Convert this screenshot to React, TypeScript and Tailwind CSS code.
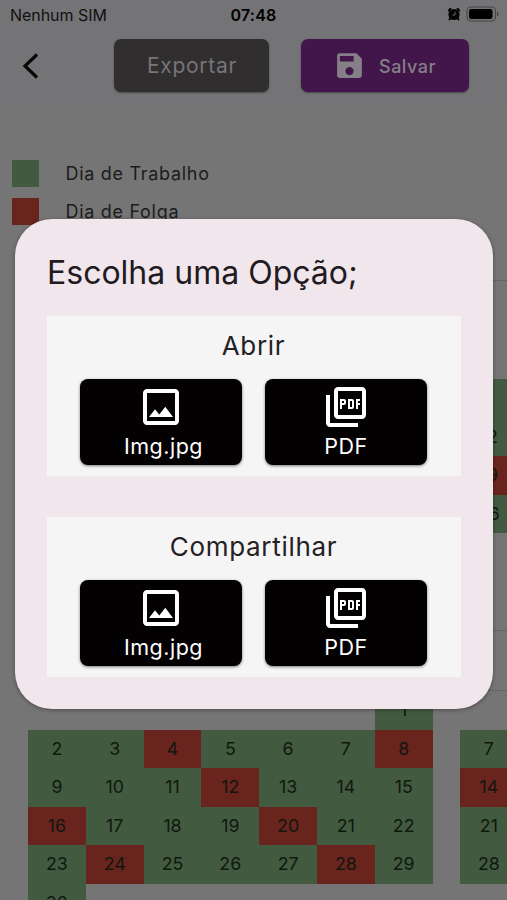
import { MdOutlineImage, MdOutlinePictureAsPdf, MdSave } from 'react-icons/md';

type Day = { n?: number; off?: boolean; past?: boolean };

const monthRows: Day[][] = [
  [{}, {}, {}, {}, {}, {}, { n: 1 }],
  [{ n: 2 }, { n: 3 }, { n: 4, off: true }, { n: 5 }, { n: 6 }, { n: 7 }, { n: 8, off: true }],
  [{ n: 9 }, { n: 10 }, { n: 11 }, { n: 12, off: true }, { n: 13 }, { n: 14 }, { n: 15 }],
  [{ n: 16, off: true }, { n: 17 }, { n: 18 }, { n: 19 }, { n: 20, off: true }, { n: 21 }, { n: 22 }],
  [{ n: 23 }, { n: 24, off: true }, { n: 25 }, { n: 26 }, { n: 27 }, { n: 28, off: true }, { n: 29 }],
  [{ n: 30 }],
];

// Only the first column of the next month fits on the screen
const nextMonthRows: Day[][] = [[{}], [{ n: 7 }], [{ n: 14, off: true }], [{ n: 21 }], [{ n: 28 }]];
const topMonthRows: Day[][] = [[{}], [{ past: true }], [{ n: 12 }], [{ n: 19, off: true }], [{ n: 26 }]];

function DayCell({ day }: { day: Day }) {
  const color = !day.n && !day.past ? '' : day.off ? 'bg-[#6a241e]' : 'bg-[#425b40]';
  return (
    <div className={`flex h-[38.5px] w-[57.8px] shrink-0 items-center justify-center pt-px text-[17.8px] text-[#10170f] ${color}`}>
      {day.n}
    </div>
  );
}

function Month({ rows }: { rows: Day[][] }) {
  return (
    <div className="shrink-0">
      {rows.map((row, i) => (
        <div key={i} className="flex">
          {row.map((day, j) => (
            <DayCell key={j} day={day} />
          ))}
        </div>
      ))}
    </div>
  );
}

function Legend({ color, label }: { color: string; label: string }) {
  return (
    <div className="flex h-[27px] items-center gap-[27px]">
      <div className={`size-[27px] ${color}`}></div>
      <span className="text-[18px] tracking-[0.7px] text-[#1c1c1c]">{label}</span>
    </div>
  );
}

function StatusBar() {
  return (
    <div className="grid h-[30px] grid-cols-3 items-center px-2.5 text-[16px] text-[#111]">
      <span className="tracking-[-0.05px]">Nenhum SIM</span>
      <span className="text-center font-semibold tracking-[0.2px] text-black">07:48</span>
      <div className="flex items-center justify-end gap-[5px] pb-[2px]">
        <svg width="14" height="14" viewBox="0 0 14 14">
          <circle cx="7" cy="7.5" r="5.6" fill="#050505" />
          <path d="M1.800 3.500 3.500 1.800M12.200 3.500 10.500 1.800M3.500 11 2.500 12.500M10.500 11l1 1.500" stroke="#050505" strokeWidth="2" strokeLinecap="round" />
          <path d="M8 4.800V8H5.500" stroke="#747477" strokeWidth="0.9" fill="none" />
        </svg>
        <svg width="34" height="16" viewBox="0 0 34 16" className="-mr-[3px]">
          <rect x="1" y="1" width="28.5" height="14" rx="4" fill="none" stroke="#454547" strokeWidth="1.1" />
          <rect x="3" y="3" width="23.5" height="10" rx="2.2" fill="#000" />
          <path d="M31 5.500c2 .8 2 4.200 0 5z" fill="#454547" />
        </svg>
      </div>
    </div>
  );
}

function OptionCard({ title }: { title: string }) {
  return (
    <section className="h-[160px] bg-[#f5f5f5] pr-[34px] pl-[33px] pt-[10px]">
      <h2 className="text-center text-[26px] leading-[40px] tracking-[0.7px] text-[#242124]">{title}</h2>
      <div className="mt-[13px] flex justify-between">
        <button className="flex h-[86px] w-[162px] flex-col items-center rounded-[8px] bg-[#030102] pt-1 text-white shadow-[0_1px_3px_rgba(0,0,0,0.5)]">
          <MdOutlineImage className="size-12" />
          <span className="pt-px pl-[5px] text-[21.5px] leading-[29px] tracking-[0.5px]">Img.jpg</span>
        </button>
        <button className="flex h-[86px] w-[162px] flex-col items-center rounded-[8px] bg-[#030102] pt-1 text-white shadow-[0_1px_3px_rgba(0,0,0,0.5)]">
          <MdOutlinePictureAsPdf className="size-12" />
          <span className="pt-px text-[21.5px] leading-[29px] tracking-[0.5px]">PDF</span>
        </button>
      </div>
    </section>
  );
}

export default function App() {
  return (
    <div className="relative h-[900px] w-[507px] overflow-hidden bg-[#757575] font-['Inter',sans-serif]">
      <header className="h-[105px] bg-[#747477]">
        <StatusBar />
        <div className="flex pt-[9px]">
          <div className="flex h-[53px] w-[114px] items-center pl-[22px]">
            <svg width="18" height="28" viewBox="0 0 18 28" fill="none" stroke="#070707" strokeWidth="3.2">
              <path d="M15 2.500 3 14l12 11.500" />
            </svg>
          </div>
          <button className="h-[53px] w-[155px] rounded-[7px] bg-[#302e2f] pl-px text-[21px] tracking-[0.7px] text-[#777577] shadow-[0_1px_2px_rgba(0,0,0,0.4)]">
            Exportar
          </button>
          <button className="ml-8 flex h-[53px] w-[168px] items-center rounded-[7px] bg-[#43164b] pl-[32px] text-[#858087] shadow-[0_1px_2px_rgba(0,0,0,0.4)]">
            <MdSave className="size-[33px]" />
            <span className="ml-[13px] pt-px text-[18px] font-medium tracking-[0.5px]">Salvar</span>
          </button>
        </div>
      </header>

      <div className="flex flex-col gap-[11px] pt-[55px] pl-[11.5px]">
        <Legend color="bg-[#425b40]" label="Dia de Trabalho" />
        <Legend color="bg-[#6a241e]" label="Dia de Folga" />
      </div>

      <div className="mt-[55px] flex h-[350px] justify-end">
        <div className="w-[47px]">
          <div className="h-[60.5px] border-t border-[#666]"></div>
          <Month rows={topMonthRows} />
        </div>
      </div>
      <div className="flex">
        <div className="ml-7 w-[404.6px] shrink-0">
          <div className="h-[61px] border-y border-[#666]"></div>
          <Month rows={monthRows} />
        </div>
        <div className="ml-[27.4px] w-[47px] shrink-0">
          <div className="h-[61px] border-y border-[#666]"></div>
          <Month rows={nextMonthRows} />
        </div>
      </div>

      <div role="dialog" className="absolute top-[219px] left-[15px] h-[490px] w-[478px] rounded-[37px] bg-[#f0e6eb] px-8 shadow-[0_1px_4px_rgba(0,0,0,0.35)]">
        <h1 className="pt-[33px] pb-[22px] text-[32px] leading-[42px] tracking-[0px] text-[#211a20]">Escolha uma Opção;</h1>
        <div className="flex flex-col gap-[41px]">
          <OptionCard title="Abrir" />
          <OptionCard title="Compartilhar" />
        </div>
      </div>
    </div>
  );
}
